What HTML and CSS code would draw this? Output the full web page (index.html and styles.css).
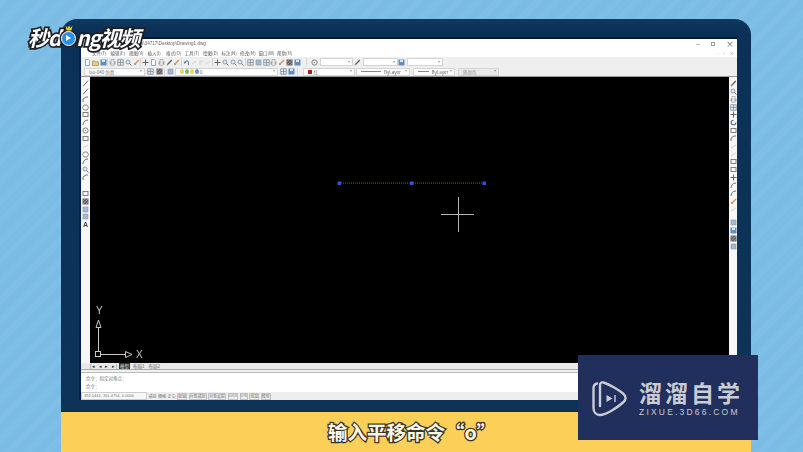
FILE: index.html
```html
<!DOCTYPE html>
<html lang="zh">
<head>
    <meta charset="UTF-8">
    <title>输入平移命令</title>
    <link rel="stylesheet" href="styles.css">
</head>
<body>
<svg class="sprites" width="0" height="0">
    <symbol id="doc" viewBox="0 0 7 7"><path d="M1.500.5h3l1 1v5h-4z" fill="#fff" stroke="#5a7fa8" stroke-width=".8"/></symbol>
    <symbol id="open" viewBox="0 0 7 7"><path d="M.5 2h2.500l.5.8h3v3.700h-6z" fill="#e9c65c" stroke="#8a7330" stroke-width=".7"/></symbol>
    <symbol id="save" viewBox="0 0 7 7"><rect x=".5" y=".5" width="6" height="6" fill="#3f73b5"/><rect x="2" y="1" width="3" height="2" fill="#dbe6f2"/></symbol>
    <symbol id="print" viewBox="0 0 7 7"><rect x=".5" y="2.500" width="6" height="3" fill="#9a9a9a"/><rect x="2" y=".7" width="3" height="5.600" fill="#e8e8e8" stroke="#777" stroke-width=".5"/></symbol>
    <symbol id="grid" viewBox="0 0 7 7"><path d="M.7.7h5.600v5.600H.7zM3.500.7v5.600M.7 3.500h5.600" fill="#dfe7ef" stroke="#5c6b7a" stroke-width=".7"/></symbol>
    <symbol id="zoom" viewBox="0 0 7 7"><circle cx="3" cy="3" r="2" fill="#dbe9f6" stroke="#55718c" stroke-width=".8"/><path d="M4.500 4.500L6.500 6.500" stroke="#555" stroke-width="1"/></symbol>
    <symbol id="pen" viewBox="0 0 7 7"><path d="M1 6L5.800 1" stroke="#333" stroke-width="1.100"/><path d="M1 6l1-.3" stroke="#c9a227" stroke-width="1"/></symbol>
    <symbol id="undo" viewBox="0 0 7 7"><path d="M5.500 6V3.200C5.500 1.500 2.500 1.500 2 3.200" fill="none" stroke="#24508f" stroke-width="1"/><path d="M.6 2.600L3.300 2.900 1.800 5z" fill="#24508f"/></symbol>
    <symbol id="redo" viewBox="0 0 7 7"><path d="M2 6V3.200C2 1.500 4.500 1.500 5 3" fill="none" stroke="#bbb" stroke-width=".9"/></symbol>
    <symbol id="line" viewBox="0 0 7 7"><path d="M1 6.300L6 .7" stroke="#3a3a3a" stroke-width=".9"/></symbol>
    <symbol id="poly" viewBox="0 0 7 7"><path d="M1 6V3L4 1h2" fill="none" stroke="#444" stroke-width=".9"/></symbol>
    <symbol id="hex" viewBox="0 0 7 7"><path d="M2 1h3l1.500 2.500L5 6H2L.5 3.500z" fill="none" stroke="#555" stroke-width=".8"/></symbol>
    <symbol id="rect" viewBox="0 0 7 7"><rect x="1" y="1.500" width="5" height="4" fill="none" stroke="#555" stroke-width=".9"/></symbol>
    <symbol id="arc" viewBox="0 0 7 7"><path d="M1 6C1 3 3 1 6 1" fill="none" stroke="#444" stroke-width=".9"/></symbol>
    <symbol id="circ" viewBox="0 0 7 7"><circle cx="3.500" cy="3.500" r="2.600" fill="none" stroke="#555" stroke-width=".9"/><circle cx="3.500" cy="3.500" r=".7" fill="#777"/></symbol>
    <symbol id="faint" viewBox="0 0 7 7"><path d="M1 5L6 2" stroke="#bbb" stroke-width=".8"/></symbol>
    <symbol id="hatch" viewBox="0 0 7 7"><rect x=".5" y=".5" width="6" height="6" fill="#444"/><path d="M1 3L3 1M1 6L6 1M4 6L6 4" stroke="#aaa" stroke-width=".5"/></symbol>
    <symbol id="blue" viewBox="0 0 7 7"><rect x="1" y="1" width="5" height="5" fill="#8ea9cc" stroke="#6d7f96" stroke-width=".6"/></symbol>
    <symbol id="move" viewBox="0 0 7 7"><path d="M3.500.5v6M.5 3.500h6" stroke="#333" stroke-width=".9"/></symbol>
    <symbol id="rot" viewBox="0 0 7 7"><path d="M5.800 3.500A2.300 2.300 0 1 1 3.500 1.200" fill="none" stroke="#24508f" stroke-width="1.100"/></symbol>
    <symbol id="brush" viewBox="0 0 7 7"><path d="M1.500 5.500L6 1" stroke="#d07a2b" stroke-width="1.200"/><path d="M1 4h2v2H1z" fill="#a98c3c"/></symbol>
</svg>

<div class="page">
    <div class="monitor">
        <div class="app">
            <div class="titlebar">
                <span class="title-path">s\34717\Desktop\Drawing1.dwg</span>
                <span class="win-btns">
                    <span class="win-min"></span>
                    <span class="win-max"></span>
                    <span class="win-close">×</span>
                </span>
            </div>
            <div class="menubar">
                <span>文件(F)</span><span>编辑(E)</span><span>视图(V)</span><span>插入(I)</span><span>格式(O)</span><span>工具(T)</span><span>绘图(D)</span><span>标注(N)</span><span>修改(M)</span><span>窗口(W)</span><span>帮助(H)</span>
                <span class="doc-btns">- ▫ ×</span>
            </div>
            <div class="toolbar">
                <svg class="ic"><use href="#doc"/></svg><svg class="ic"><use href="#open"/></svg><svg class="ic"><use href="#save"/></svg>
                <i class="sep"></i>
                <svg class="ic"><use href="#print"/></svg><svg class="ic"><use href="#grid"/></svg><svg class="ic"><use href="#zoom"/></svg><svg class="ic"><use href="#brush"/></svg>
                <i class="sep"></i>
                <svg class="ic"><use href="#move"/></svg><svg class="ic"><use href="#doc"/></svg><svg class="ic"><use href="#print"/></svg><svg class="ic"><use href="#pen"/></svg><svg class="ic"><use href="#brush"/></svg>
                <i class="sep"></i>
                <svg class="ic"><use href="#undo"/></svg><svg class="ic small"><use href="#faint"/></svg><svg class="ic"><use href="#redo"/></svg><svg class="ic small"><use href="#faint"/></svg>
                <i class="sep"></i>
                <svg class="ic"><use href="#move"/></svg><svg class="ic"><use href="#zoom"/></svg><svg class="ic"><use href="#zoom"/></svg><svg class="ic"><use href="#zoom"/></svg>
                <i class="sep"></i>
                <svg class="ic"><use href="#grid"/></svg><svg class="ic"><use href="#blue"/></svg><svg class="ic"><use href="#grid"/></svg><svg class="ic"><use href="#print"/></svg><svg class="ic"><use href="#brush"/></svg><svg class="ic"><use href="#hatch"/></svg><svg class="ic"><use href="#save"/></svg>
                <i class="sep wide"></i>
                <svg class="ic"><use href="#circ"/></svg>
                <span class="combo w33"></span>
                <svg class="ic"><use href="#pen"/></svg>
                <span class="combo w35"></span>
                <svg class="ic"><use href="#save"/></svg>
                <span class="combo w36"></span>
            </div>
            <div class="toolbar second">
                <span class="combo w61">Iso-040 仿真</span>
                <svg class="ic"><use href="#grid"/></svg><svg class="ic"><use href="#hatch"/></svg>
                <i class="sep"></i>
                <svg class="ic"><use href="#blue"/></svg>
                <span class="combo w103"><b class="bulb"></b><b class="bulb green"></b><b class="bulb"></b><b class="bulb blue"></b>0</span>
                <svg class="ic"><use href="#grid"/></svg><svg class="ic"><use href="#save"/></svg>
                <i class="sep"></i>
                <span class="combo w52"><b class="swatch"></b>红</span>
                <span class="combo w54"><b class="dash"></b>ByLayer</span>
                <span class="combo w42"><b class="dash short"></b>ByLayer</span>
                <span class="combo w41 off">随颜色</span>
            </div>
            <div class="work">
                <div class="side left">
                    <svg class="ic"><use href="#line"/></svg>
                    <svg class="ic"><use href="#line"/></svg>
                    <svg class="ic"><use href="#poly"/></svg>
                    <svg class="ic"><use href="#hex"/></svg>
                    <svg class="ic"><use href="#rect"/></svg>
                    <svg class="ic"><use href="#arc"/></svg>
                    <svg class="ic"><use href="#circ"/></svg>
                    <svg class="ic"><use href="#rect"/></svg>
                    <svg class="ic"><use href="#faint"/></svg>
                    <svg class="ic"><use href="#hex"/></svg>
                    <svg class="ic"><use href="#arc"/></svg>
                    <svg class="ic"><use href="#zoom"/></svg>
                    <svg class="ic"><use href="#poly"/></svg>
                    <i class="gap"></i>
                    <svg class="ic"><use href="#rect"/></svg>
                    <svg class="ic"><use href="#hatch"/></svg>
                    <svg class="ic"><use href="#blue"/></svg>
                    <svg class="ic"><use href="#blue"/></svg>
                    <span class="side-a">A</span>
                </div>
                <div class="canvas">
                    <svg class="drawing" width="639" height="286">
                        <line x1="249" y1="106" x2="394" y2="106" stroke="#c03030" stroke-width="1" stroke-dasharray="1 1"/>
                        <rect x="247.500" y="104.500" width="3.500" height="3.500" fill="#3a52d0"/>
                        <rect x="320" y="104.500" width="3.500" height="3.500" fill="#3a52d0"/>
                        <rect x="392.500" y="104.500" width="3.500" height="3.500" fill="#3a52d0"/>
                        <path d="M351 137.500h33M368.500 120v35" stroke="#b5b5b5" stroke-width="1"/>
                        <g fill="none" stroke="#c8c8c8" stroke-width="1">
                            <rect x="5.500" y="274.500" width="5" height="5"/>
                            <path d="M8.500 274V251M11 277.500h24"/>
                            <path d="M8.500 243L6 250.500h5zM35.500 274.500L42 277.500l-6.500 3z"/>
                        </g>
                        <text x="6" y="237" class="ucs">Y</text>
                        <text x="46" y="281" class="ucs">X</text>
                    </svg>
                </div>
                <div class="side right">
                    <svg class="ic"><use href="#pen"/></svg>
                    <svg class="ic"><use href="#zoom"/></svg>
                    <svg class="ic"><use href="#print"/></svg>
                    <svg class="ic"><use href="#grid"/></svg>
                    <svg class="ic"><use href="#move"/></svg>
                    <svg class="ic"><use href="#rot"/></svg>
                    <svg class="ic"><use href="#rect"/></svg>
                    <svg class="ic"><use href="#poly"/></svg>
                    <svg class="ic"><use href="#faint"/></svg>
                    <svg class="ic"><use href="#faint"/></svg>
                    <svg class="ic"><use href="#rect"/></svg>
                    <svg class="ic"><use href="#rect"/></svg>
                    <svg class="ic"><use href="#move"/></svg>
                    <svg class="ic"><use href="#arc"/></svg>
                    <svg class="ic"><use href="#arc"/></svg>
                    <svg class="ic"><use href="#brush"/></svg>
                    <svg class="ic"><use href="#faint"/></svg>
                    <i class="gap short"></i>
                    <svg class="ic"><use href="#blue"/></svg>
                    <svg class="ic"><use href="#save"/></svg>
                    <svg class="ic"><use href="#hatch"/></svg>
                    <svg class="ic"><use href="#blue"/></svg>
                </div>
            </div>
            <div class="tabs">
                <span class="tab-nav">|◂ ◂ ▸ ▸|</span>
                <span class="tab on">模型</span>
                <span class="tab">布局1</span>
                <span class="tab">布局2</span>
            </div>
            <div class="command">
                <div>命令：指定对角点：</div>
                <div>命令：</div>
            </div>
            <div class="statusbar">
                <span class="coords">392.5441, 351.4754, 0.0000</span>
                <span>捕捉</span><span>栅格</span><span>正交</span><span class="box">极轴</span><span class="box">对象捕捉</span><span class="box">对象追踪</span><span class="box latin">DUCS</span><span class="box latin">DYN</span><span class="box">线宽</span><span class="box">模型</span>
            </div>
        </div>
    </div>
    <div class="band">
        <span class="caption">输入平移命令“o”</span>
    </div>

    <div class="brand">
        <span>秒d</span><span class="brand-o"><svg class="crown" width="8" height="6" viewBox="0 0 8 6"><path d="M.5.5L2.500 3 4 .5 5.500 3 7.500.5 6.500 5.500h-5z" fill="#f2c230"/></svg><b></b></span><span>ng视频</span>
    </div>

    <div class="stamp">
        <svg class="stamp-logo" width="35" height="37" viewBox="0 0 35 37">
            <path d="M5 3.500C2.500 4 1.500 6 1.500 8.500V28C1.500 32 4 35 8 35C14 35 26 27 31 22.500C34.500 19.500 34.500 16.500 31 13.500C27 10 18 4.500 11.500 2.500C9 2 8 3 8 5.500V26" fill="none" stroke="#c9ccd3" stroke-width="2.400" stroke-linecap="round" stroke-linejoin="round"/>
            <path d="M14.500 15L20.500 18.500L14.500 22z" fill="#c9ccd3"/>
            <path d="M23 15V22" stroke="#c9ccd3" stroke-width="1.400"/>
        </svg>
        <div class="stamp-text">
            <div class="stamp-cn">溜溜自学</div>
            <div class="stamp-en">ZIXUE.3D66.COM</div>
        </div>
    </div>
</div>
</body>
</html>
```

FILE: styles.css
```css
* {
    box-sizing: border-box;
}

body {
    margin: 0;
    font-family: "Noto Sans CJK SC", "Liberation Sans", sans-serif;
    overflow: hidden;
}

.sprites {
    display: block;
}

.page {
    position: relative;
    width: 803px;
    height: 452px;
    overflow: hidden;
    padding: 19px 0 0 61px;
    background-color: #7bbce5;
    background-image: repeating-linear-gradient(135deg, rgba(255, 255, 255, 0.03) 0 6px, rgba(255, 255, 255, 0) 6px 14px);
}

/* monitor frame */
.monitor {
    width: 690px;
    height: 393px;
    padding: 20px 14px 12px 20px;
    background: linear-gradient(#0f3a60, #0b3158 10px, #0d3358);
    border-radius: 16px 16px 0 0;
    box-shadow: inset 0 -1px 0 #0a2a4c;
}

.app {
    display: flex;
    flex-direction: column;
    width: 656px;
    height: 361px;
    background: #f0f0f0;
    box-shadow: 0 -2px 0 #04183a, -2px 0 0 #06224a;
    filter: blur(0.45px);
    font-size: 4.5px;
    line-height: 8px;
    color: #666;
}

.titlebar {
    display: flex;
    justify-content: space-between;
    height: 10px;
    padding-left: 60px;
    background: #fff;
}

.title-path {
    line-height: 10px;
    font-family: "Liberation Sans", sans-serif;
    font-size: 4.6px;
}

.win-btns {
    display: flex;
    align-items: center;
    gap: 11px;
    padding-right: 6px;
}

.win-min {
    width: 4px;
    height: 1px;
    background: #bbb;
}

.win-max {
    width: 4px;
    height: 4px;
    border: 1px solid #999;
}

.win-close {
    font-size: 8px;
    width: 5px;
    line-height: 8px;
    color: #555;
}

.menubar {
    display: flex;
    gap: 4.5px;
    height: 8px;
    padding: 1px 0 0 11px;
    line-height: 6px;
    background: #fff;
    color: #555;
}

.menubar span {
    width: 14px;
    white-space: nowrap;
}

.menubar .doc-btns {
    margin-left: auto;
    width: auto;
    padding-right: 2px;
    letter-spacing: 1px;
    color: #999;
}

.toolbar {
    display: flex;
    align-items: center;
    gap: 0.8px;
    height: 10px;
    padding-left: 3px;
    background: #efefef;
}

.toolbar.second {
    height: 10px;
    gap: 1.5px;
    border-bottom: 1px solid #999;
}

.ic {
    flex: none;
    width: 7px;
    height: 7px;
    opacity: 0.8;
}

.ic.small {
    width: 6px;
}

.sep {
    flex: none;
    width: 1px;
    height: 8px;
    background: #d4d4d4;
}

.sep.wide {
    margin: 0 4px;
}

.combo {
    display: flex;
    align-items: center;
    gap: 1px;
    flex: none;
    position: relative;
    height: 8px;
    margin-left: 1px;
    padding-left: 4px;
    background: #fff;
    border: 1px solid #d4d4d4;
    line-height: 6px;
    white-space: nowrap;
    font-size: 4.5px;
}

.combo::after {
    content: "";
    position: absolute;
    right: 2px;
    top: 1.5px;
    border: 1.5px solid transparent;
    border-top: 2px solid #999;
}

.second .combo {
    margin-left: 0;
}

.second .w61 {
    margin-right: 0.5px;
}

.second .w52 {
    margin-left: 3.5px;
}

.second .w42 {
    margin-left: 1px;
}

.second .w41 {
    margin-left: 2px;
}

.combo.off {
    background: #e9e9e9;
    color: #999;
}

.w33 { width: 33px; }
.w35 { width: 35px; }
.w36 { width: 36px; }
.w41 { width: 41px; }
.w42 { width: 42px; }
.w52 { width: 52px; }
.w54 { width: 54px; }
.w61 { width: 61px; }
.w103 { width: 103px; }

.bulb {
    width: 4px;
    height: 5px;
    border-radius: 50%;
    background: #e2d552;
}

.bulb.green {
    background: #78b86a;
}

.bulb.blue {
    background: #6c8fc4;
}

.swatch {
    width: 4px;
    height: 4px;
    margin-right: 1px;
    background: #c01616;
}

.dash {
    width: 20px;
    height: 1px;
    margin-right: 2px;
    background: #888;
}

.dash.short {
    width: 11px;
}

.work {
    display: flex;
    height: 286px;
}

.side {
    display: flex;
    flex-direction: column;
    align-items: center;
    gap: 0.85px;
    flex: none;
    padding-top: 3px;
    background: #f7f7f7;
}

.side.left {
    width: 9px;
}

.side.right {
    width: 8px;
}

.gap {
    flex: none;
    height: 7px;
}

.gap.short {
    height: 5px;
}

.side-a {
    font: bold 7px/7px "Liberation Sans", sans-serif;
    color: #444;
}

.canvas {
    flex: none;
    width: 639px;
    height: 286px;
    background: #000;
}

.drawing {
    display: block;
}

.ucs {
    font: 10px "Liberation Sans", sans-serif;
    fill: #c8c8c8;
}

.tabs {
    display: flex;
    align-items: center;
    gap: 2px;
    height: 7px;
    padding-left: 9px;
    background: #e9e9e9;
    font-size: 4.5px;
    border-bottom: 1px solid #aaa;
}

.tab-nav {
    width: 27px;
    letter-spacing: 1.2px;
    white-space: nowrap;
    color: #333;
}

.tab {
    padding: 0 1px;
    line-height: 6px;
    color: #555;
}

.tab.on {
    background: #333;
    color: #ddd;
}

.command {
    height: 22px;
    margin-top: 2px;
    padding: 1px 0 0 5px;
    background: #fff;
    border-top: 1px solid #bbb;
    line-height: 8px;
    color: #777;
}

.statusbar {
    display: flex;
    align-items: center;
    gap: 1.5px;
    height: 8px;
    margin-top: -2px;
    background: #eee;
    font-size: 4px;
    line-height: 6px;
    white-space: nowrap;
    color: #777;
}

.coords {
    width: 66px;
    padding-left: 2px;
    background: #f8f8f8;
    border: 1px solid #ccc;
    line-height: 6px;
    font-family: "Liberation Sans", sans-serif;
}

.statusbar .box {
    border: 1px solid #c4c4c4;
    line-height: 5px;
}

.statusbar .latin {
    font-family: "Liberation Sans", sans-serif;
    font-size: 3px;
}

/* yellow caption band */
.band {
    display: flex;
    align-items: center;
    justify-content: center;
    width: 690px;
    height: 40px;
    padding: 0 0 1px 12px;
    background: #fcd058;
}

.caption {
    font-size: 19.5px;
    font-weight: 700;
    line-height: 24px;
    color: #fff8e8;
    -webkit-text-stroke: 2.6px #3a3528;
    paint-order: stroke fill;
}

/* logo over the top left corner */
.brand {
    position: absolute;
    left: 28px;
    top: 27px;
    display: flex;
    align-items: center;
    font-size: 21px;
    font-weight: 700;
    font-style: italic;
    line-height: 20px;
    color: #fff;
    -webkit-text-stroke: 3.5px #1f2024;
    paint-order: stroke fill;
    letter-spacing: -1.2px;
}

.brand-o {
    position: relative;
    display: block;
    width: 15px;
    height: 15px;
    margin: 3px 0 0 1px;
    border: 1.5px solid #fff;
    border-radius: 50%;
    background: #2a8fe6;
    box-shadow: 0 0 0 1.5px #1f2024;
}

.brand-o b {
    display: block;
    width: 0;
    height: 0;
    margin: 2.5px 0 0 3.5px;
    border: 3.5px solid transparent;
    border-left: 5.5px solid #fff;
    border-right: 0;
}

.crown {
    position: absolute;
    left: 2.5px;
    top: -7px;
}

/* watermark over the bottom right corner */
.stamp {
    position: absolute;
    left: 578px;
    top: 355px;
    display: flex;
    align-items: center;
    gap: 12px;
    width: 180px;
    height: 85px;
    padding: 0 0 0 14px;
    background: #212f5c;
}

.stamp-logo {
    flex: none;
    margin-top: 2px;
}

.stamp-text {
    margin-top: 0;
    color: #c9ccd3;
}

.stamp-cn {
    font-size: 23px;
    font-weight: 700;
    line-height: 26px;
    letter-spacing: 3px;
    white-space: nowrap;
}

.stamp-en {
    margin-top: 2px;
    font-family: "Liberation Sans", sans-serif;
    font-size: 8.5px;
    line-height: 10px;
    letter-spacing: 2.2px;
    white-space: nowrap;
}
```
